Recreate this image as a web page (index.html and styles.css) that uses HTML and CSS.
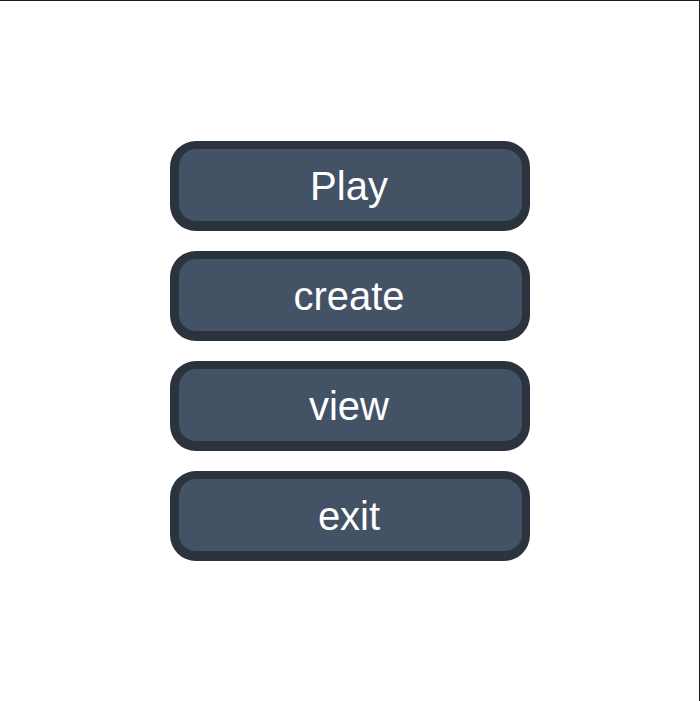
FILE: index.html
```html
<!DOCTYPE html>
<html>
<head>
<meta charset="utf-8">
<link rel="stylesheet" href="styles.css">
</head>
<body>
<div class="frame">
  <div class="menu">
    <button class="btn">Play</button>
    <button class="btn">create</button>
    <button class="btn">view</button>
    <button class="btn">exit</button>
  </div>
</div>
</body>
</html>
```
FILE: styles.css
```css
html, body {
  margin: 0;
  padding: 0;
  background: #ffffff;
}
.frame {
  box-sizing: border-box;
  width: 700px;
  height: 701px;
  border-top: 1px solid #1b1d21;
  border-right: 1px solid #1b1d21;
  display: flex;
  align-items: center;
  justify-content: center;
}
.menu {
  display: flex;
  flex-direction: column;
  gap: 20px;
}
.btn {
  box-sizing: border-box;
  width: 360px;
  height: 90px;
  background: #435265;
  border: 8px solid #2b333e;
  border-left-width: 9px;
  border-bottom-width: 10px;
  border-radius: 26px;
  color: #ffffff;
  font-family: "Liberation Sans", Arial, sans-serif;
  font-size: 40px;
  padding: 2px 2px 0 0;
  display: flex;
  align-items: center;
  justify-content: center;
}
```
